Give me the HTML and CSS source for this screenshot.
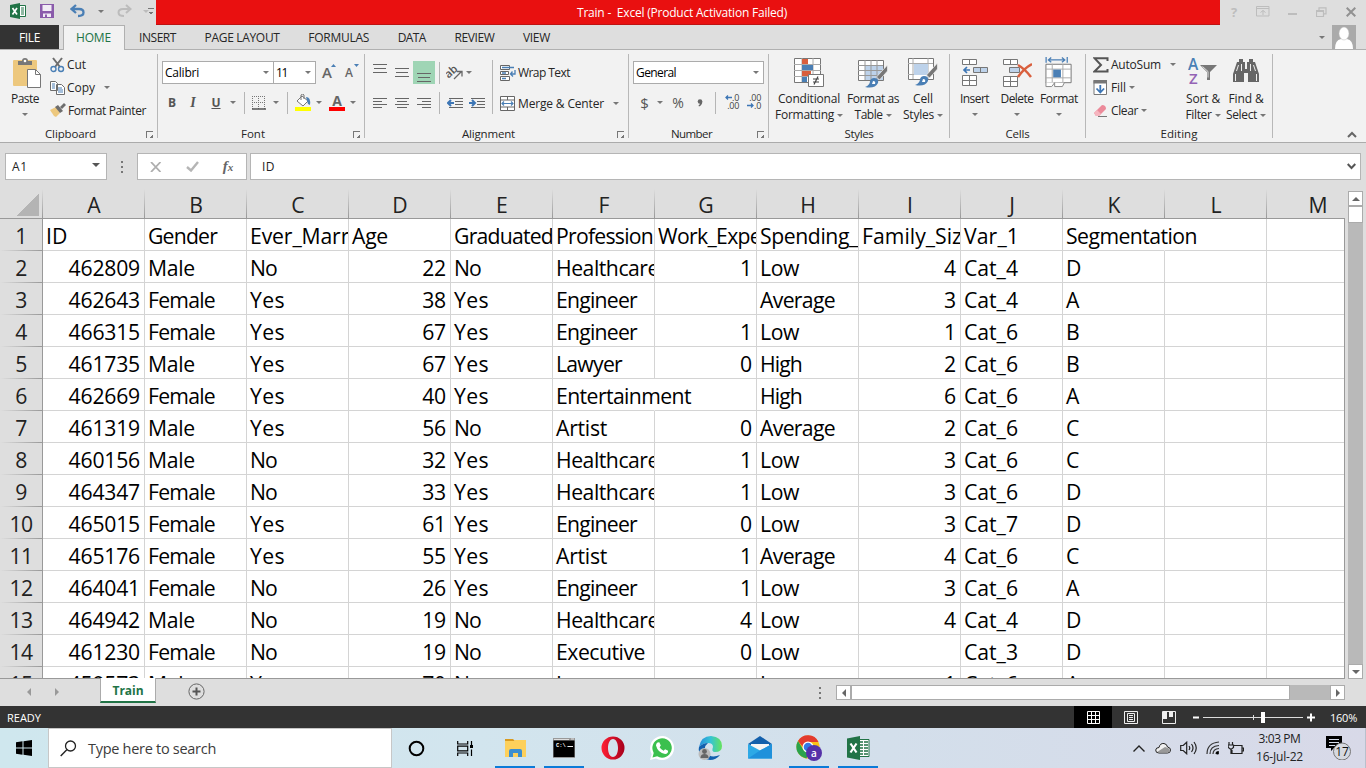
FILE: index.html
```html
<!DOCTYPE html>
<html lang="en">
<head>
<meta charset="utf-8">
<title>Train - Excel</title>
<link rel="stylesheet" href="styles.css">
</head>
<body>
<div class="app">
  <header class="titlebar">
    <div class="quick">
      <svg width="16" height="16" viewBox="0 0 16 16"><path d="M9 2.5h6.500v11H9z" fill="#fff" stroke="#217346"/><path d="M11 5h3M11 7h3M11 9h3M11 11h3" stroke="#217346"/><path d="M0 2l10-2v16L0 14z" fill="#217346"/><path d="M2.500 5l4.500 6.500M7 5l-4.500 6.500" stroke="#fff" stroke-width="1.700"/></svg>
      <svg width="14" height="14" viewBox="0 0 14 14"><path d="M0 0h14v14H0z" fill="#8a5bab"/><path d="M2.500 1h9v6h-9zM3 9.500h8V13H3z" fill="#f1ecf5"/><path d="M5 10.500h2V13H5z" fill="#8a5bab"/></svg>
      <svg width="15" height="14" viewBox="0 0 15 14"><path d="M6 1L1.500 5 6 9M2 5h7q4.500 0 4.500 3.500T8 12" fill="none" stroke="#4a7fb5" stroke-width="2.300"/></svg>
      <i class="caret"></i>
      <svg width="15" height="14" viewBox="0 0 15 14"><path d="M9 1l4.500 4L9 9M13 5H6Q1.500 5 1.500 8.500T7 12" fill="none" stroke="#bcbcbc" stroke-width="2"/></svg>
      <i class="caret pale"></i>
      <i class="more"></i>
    </div>
    <div class="alert"><span data-w="210">Train -&nbsp; Excel (Product Activation Failed)</span></div>
    <div class="winbtns">
      <b>?</b>
      <svg width="14" height="11" viewBox="0 0 14 11"><path d="M.5.500h12.500v9.500H.5zM.5 2.500h12.500M7 9V4.500M4.500 6.500L7 4.500l2.500 2" fill="none" stroke="#bdbdbd"/></svg>
      <svg width="10" height="10" viewBox="0 0 10 10"><path d="M0 7h9" stroke="#bdbdbd" stroke-width="2"/></svg>
      <svg width="11" height="10" viewBox="0 0 11 10"><path d="M.5 3.500h7v6h-7zM3 3V.800h7v6H8M.5 4.300h7" fill="none" stroke="#bdbdbd" stroke-width="1.200"/></svg>
      <svg width="10" height="10" viewBox="0 0 10 10"><path d="M.7.700l8.600 8.600M9.300.700L.7 9.300" stroke="#919191" stroke-width="2"/></svg>
    </div>
  </header>

  <nav class="tabs">
    <span class="file"><span data-w="21">FILE</span></span>
    <span class="home"><span data-w="35">HOME</span></span>
    <div class="tablist"><span data-w="37">INSERT</span><span data-w="75">PAGE LAYOUT</span><span data-w="61">FORMULAS</span><span data-w="28">DATA</span><span data-w="40">REVIEW</span><span data-w="27">VIEW</span></div>
    <i class="caret"></i>
    <svg class="avatar" width="24" height="24" viewBox="0 0 24 24"><path d="M0 0h24v24H0z" fill="#aaa"/><path d="M3 24q0-9 6-10h6q6 1 6 10z" fill="#fff"/><ellipse cx="12" cy="8.500" rx="5" ry="6.500" fill="#fff" stroke="#bbb" stroke-width=".5"/></svg>
  </nav>

  <section class="ribbon">
    <div class="group clipboard">
      <div class="body">
        <div class="paste">
          <svg width="30" height="31" viewBox="0 0 30 31"><rect x="1" y="3" width="24" height="26" rx="1" fill="#edc87e"/><path d="M6 8V4h4q0-3 3-3t3 3h4v4z" fill="#777"/><circle cx="13" cy="4" r="1.300" fill="#fff"/><path d="M15.500 12.500h8l5 5v13h-13z" fill="#fff" stroke="#777"/><path d="M23.500 12.500v5h5" fill="none" stroke="#777"/></svg>
          <span data-w="28">Paste</span><i class="caret"></i>
        </div>
        <div class="lines">
          <div><svg width="15" height="16" viewBox="0 0 15 16"><path d="M3 1l7 9M12 1L5 10" stroke="#6d6d6d" stroke-width="2"/><circle cx="3.500" cy="12" r="2.500" fill="none" stroke="#4a7fb5" stroke-width="1.400"/><circle cx="11" cy="12" r="2.500" fill="none" stroke="#4a7fb5" stroke-width="1.400"/></svg><span data-w="19">Cut</span></div>
          <div><svg width="15" height="15" viewBox="0 0 15 15"><path d="M.5 1.500h5l2 2v7h-7zM6.500 4.500h5l3 3v7h-8z" fill="#fff" stroke="#6d6d6d"/><path d="M2 4h3M2 6h3M2 8h3M8 8h4M8 10h5M8 12h5" stroke="#4a7fb5"/></svg><span data-w="28">Copy</span><i class="caret gap9"></i></div>
          <div><svg width="16" height="15" viewBox="0 0 16 15"><path d="M0 7l6-3 4 6-4 4-2-1z" fill="#edc87e"/><path d="M5 4l3-2 5 6-3 2zM10 4l4-4 2 2-4 4z" fill="#6d6d6d"/></svg><span data-w="78">Format Painter</span></div>
        </div>
      </div>
      <div class="label"><span data-w="51">Clipboard</span><i class="launch"></i></div>
    </div>

    <div class="group font">
      <div class="body col">
        <div class="r1"><div class="combo c1"><span data-w="34">Calibri</span><i class="caret"></i></div><div class="combo c2"><span data-w="11">11</span><i class="caret"></i></div>
          <div class="grow"><span>A</span><svg width="5" height="3" viewBox="0 0 5 3"><path d="M0 3l2.500-3L5 3z" fill="#4a7fb5"/></svg></div>
          <div class="grow small"><span>A</span><svg width="5" height="3" viewBox="0 0 5 3"><path d="M0 0l2.500 3L5 0z" fill="#4a7fb5"/></svg></div></div>
        <div class="r2"><b>B</b><b class="it">I</b><b class="un">U</b><i class="caret"></i><i class="sep"></i>
          <svg width="14" height="14" viewBox="0 0 14 14"><path d="M0 .5h14M0 6.500h14M.5 0v13M6.500 0v13M12.500 0v13" stroke="#777" stroke-dasharray="1 1"/><path d="M0 13h14" stroke="#555" stroke-width="1.500"/></svg>
          <i class="caret"></i><i class="sep"></i>
          <svg width="17" height="17" viewBox="0 0 17 17"><path d="M2 7l5-5 6 5-5 5z" fill="#fff" stroke="#777"/><path d="M6 6V1q2-2 3 0v4" fill="none" stroke="#777"/><path d="M11 3q5 0 4 8l-2-1z" fill="#4a7fb5"/><path d="M0 13h16v4H0z" fill="#ff0"/></svg>
          <i class="caret"></i>
          <div class="fc">A<svg width="16" height="4" viewBox="0 0 16 4"><path d="M0 0h16v4H0z" fill="#f00"/></svg></div><i class="caret"></i></div>
      </div>
      <div class="label"><span data-w="24">Font</span><i class="launch"></i></div>
    </div>

    <div class="group align">
      <div class="body">
        <div class="leftcol">
          <div class="r1">
            <svg class="up" width="14" height="9" viewBox="0 0 14 9"><path d="M0 .5h14M1 4.500h12M0 8.500h14" stroke="#666"/></svg>
            <svg width="14" height="9" viewBox="0 0 14 9"><path d="M0 .5h14M1 4.500h12M0 8.500h14" stroke="#666"/></svg>
            <div class="on"><svg width="14" height="9" viewBox="0 0 14 9"><path d="M0 .5h14M1 4.500h12M0 8.500h14" stroke="#666"/></svg></div>
            <i class="sep"></i>
            <svg width="18" height="16" viewBox="0 0 18 16"><text x="0" y="11" transform="rotate(-42 5 9)" font-size="11" fill="#555" font-family="Open Sans" font-weight="600">ab</text><path d="M8 14l7-7M11 6.500h5v5" fill="none" stroke="#666" stroke-width="1.300"/></svg>
            <i class="caret"></i></div>
          <div class="r2">
            <svg width="14" height="12" viewBox="0 0 14 12"><path d="M0 1.500h14M0 4.500h9M0 7.500h14M0 10.500h9" stroke="#666"/></svg>
            <svg width="14" height="12" viewBox="0 0 14 12"><path d="M0 1.500h14M2 4.500h10M0 7.500h14M2 10.500h10" stroke="#666"/></svg>
            <svg width="14" height="12" viewBox="0 0 14 12"><path d="M0 1.500h14M5 4.500h9M0 7.500h14M5 10.500h9" stroke="#666"/></svg>
            <i class="sep"></i>
            <svg width="16" height="12" viewBox="0 0 16 12"><path d="M2 1.500h14M8 4.500h8M8 7.500h8M2 10.500h14" stroke="#666"/><path d="M7 6H1M4 3L1 6l3 3" fill="none" stroke="#3d76b5" stroke-width="2"/></svg>
            <svg width="16" height="12" viewBox="0 0 16 12"><path d="M2 1.500h14M8 4.500h8M8 7.500h8M2 10.500h14" stroke="#666"/><path d="M0 6h6M3 3l3 3-3 3" fill="none" stroke="#3d76b5" stroke-width="2"/></svg></div>
        </div>
        <i class="sep tall"></i>
        <div class="rightcol">
          <div><svg width="16" height="16" viewBox="0 0 16 16"><path d="M.5.500h9v4h-9zM.5 6.500h8v3h-8zM.5 11.500h9v4h-9z" fill="#fff" stroke="#666"/><path d="M2 2.500h12M2 8h4M2 13.500h4M15 5v4h-4M12.500 6.500L10.500 9l2.500 2.500" fill="none" stroke="#4a7fb5" stroke-width="1.300"/></svg><span data-w="52">Wrap Text</span></div>
          <div><svg width="16" height="15" viewBox="0 0 16 15"><path d="M.5.500h14v14H.5zM.5 4h14M.5 11h14M7.500 0v4M7.500 11v4" fill="#fff" stroke="#666"/><path d="M2 7.500h11M4 5.500l-2 2 2 2M11 5.500l2 2-2 2" fill="none" stroke="#4a7fb5" stroke-width="1.200"/></svg><span data-w="86">Merge &amp; Center</span><i class="caret gap9"></i></div>
        </div>
      </div>
      <div class="label"><span data-w="53">Alignment</span><i class="launch"></i></div>
    </div>

    <div class="group number">
      <div class="body col">
        <div class="r1"><div class="combo c3"><span data-w="40">General</span><i class="caret"></i></div></div>
        <div class="r2"><span class="sym">$</span><i class="caret"></i><span class="sym pc">%</span><svg width="6" height="8" viewBox="0 0 6 8"><circle cx="3" cy="2.500" r="2.300" fill="#666"/><path d="M5.300 2.500Q5.300 6 2 7.500L1.500 6.500Q3 5.500 3 4z" fill="#666"/></svg><i class="sep"></i>
          <div class="dec"><span><svg width="7" height="5" viewBox="0 0 7 5"><path d="M7 2.500H1M3 .500l-2 2 2 2" fill="none" stroke="#3d76b5" stroke-width="1.300"/></svg>.0</span><span>.00</span></div>
          <div class="dec"><span>.00</span><span><svg width="7" height="5" viewBox="0 0 7 5"><path d="M0 2.500h6M4 .500l2 2-2 2" fill="none" stroke="#3d76b5" stroke-width="1.300"/></svg>.0</span></div></div>
      </div>
      <div class="label"><span data-w="41">Number</span><i class="launch"></i></div>
    </div>

    <div class="group styles">
      <div class="body bigs">
        <div class="big"><svg width="30" height="31" viewBox="0 0 30 31"><path d="M.5 1.500h26v24H.5z" fill="#fff" stroke="#777"/><path d="M8 1v24M19 1v24M0 7.500h27M0 13.500h27M0 19.500h27" stroke="#aaa"/><path d="M8 2h6v5H8zM8 14h9v5H8z" fill="#d95f3d"/><path d="M8 8h11v5H8zM8 20h5v5H8z" fill="#4a7fb5"/><path d="M14.500 17.500h15v12h-15z" fill="#fff" stroke="#777"/><path d="M19 22h6M19 25h6M24 19.500l-4 8" stroke="#444" stroke-width="1.200"/></svg><span data-w="62">Conditional</span><em><span data-w="59">Formatting</span><i class="caret"></i></em></div>
        <div class="big"><svg width="30" height="31" viewBox="0 0 30 31"><path d="M.5 3.500h25v20H.5z" fill="#fff" stroke="#777"/><path d="M7 8h18v15H7z" fill="#bdd2ea"/><path d="M0 8.500h25M0 13.500h25M0 18.500h25M7 3v20M13 3v20M19 3v20" stroke="#999"/><path d="M29.500 8v6l-8 9-3-3z" fill="#777" stroke="#f2f2f2" stroke-width=".7"/><path d="M16 21q5 0 4 5-3 6-13 4 5-2 5-6 1-3 4-3z" fill="#4a7fb5"/><path d="M15 24q3 0 2 3h-3z" fill="#fff"/></svg><span data-w="52">Format as</span><em><span data-w="28">Table</span><i class="caret"></i></em></div>
        <div class="big"><svg width="30" height="31" viewBox="0 0 30 31"><path d="M.5 1.500h25v21H.5z" fill="#fff" stroke="#777"/><path d="M5 1v21M20 1v21M0 6.500h25M0 17.500h25" stroke="#aaa"/><path d="M6 7h14v11H6z" fill="#bdd2ea"/><path d="M29.500 6v6l-8 9-3-3z" fill="#777" stroke="#f2f2f2" stroke-width=".7"/><path d="M16 19q5 0 4 5-3 6-13 4 5-2 5-6 1-3 4-3z" fill="#4a7fb5"/><path d="M15 22q3 0 2 3h-3z" fill="#fff"/></svg><span data-w="20">Cell</span><em><span data-w="31">Styles</span><i class="caret"></i></em></div>
      </div>
      <div class="label"><span data-w="29">Styles</span></div>
    </div>

    <div class="group cells">
      <div class="body bigs">
        <div class="big"><svg width="28" height="31" viewBox="0 0 28 31"><path d="M1.500 2.500h14v5h-14zM8.500 2.500v5M1.500 18.500h14v10h-14zM1.500 23.500h14M8.500 18.500v10" fill="#fff" stroke="#777"/><path d="M12.500 10.500h14v5h-14z" fill="#bdd2ea" stroke="#777"/><path d="M19.500 10v6" stroke="#777"/><path d="M9 13H3M6 10l-3 3 3 3" fill="none" stroke="#3d76b5" stroke-width="1.700"/></svg><span data-w="29">Insert</span><i class="caret"></i></div>
        <div class="big"><svg width="30" height="31" viewBox="0 0 30 31"><path d="M1.500 2.500h14v5h-14zM8.500 2.500v5M1.500 19.500h14v10h-14zM1.500 24.500h14M8.500 19.500v10" fill="#fff" stroke="#777"/><path d="M7.500 10.500h10v5h-10z" fill="#bdd2ea" stroke="#777"/><path d="M16 8q7 4 13 12M30 7q-8 4-14 13" fill="none" stroke="#d95f3d" stroke-width="2.500"/></svg><span data-w="33">Delete</span><i class="caret"></i></div>
        <div class="big"><svg width="28" height="32" viewBox="0 0 28 32"><path d="M.7 0v6M22.500 0v6M3 3h17M6 .5L3 3l3 2.500M17 .5L20 3l-3 2.500" fill="none" stroke="#4a7fb5" stroke-width="1.300"/><path d="M.5 7.500h26v19H.5z" fill="#fff" stroke="#777"/><path d="M7 7v19M18 7v19M0 12.500h27M0 21.500h27" stroke="#aaa"/><path d="M8 13h8v8H8z" fill="#4a7fb5"/><path d="M.5 26v4.500h6l3-4v4h8l2-4" fill="#fff" stroke="#888"/></svg><span data-w="38">Format</span><i class="caret"></i></div>
      </div>
      <div class="label"><span data-w="24">Cells</span></div>
    </div>

    <div class="group editing">
      <div class="body">
        <div class="lines">
          <div><svg width="16" height="16" viewBox="0 0 16 16"><path d="M14.500 4V1.200H1.500L8 8l-6.500 6.500h13V12" fill="none" stroke="#555" stroke-width="2"/></svg><span data-w="50">AutoSum</span><i class="caret gap9"></i></div>
          <div><svg width="16" height="15" viewBox="0 0 16 15"><path d="M1 .5h12.500v14H1z" fill="#fff" stroke="#777"/><path d="M.5 0h13.500v3.500H.5z" fill="#777"/><path d="M7.300 5v7M3.500 8.500l3.800 4 3.800-4" fill="none" stroke="#3d76b5" stroke-width="1.800"/></svg><span data-w="15">Fill</span><i class="caret gap3"></i></div>
          <div><svg width="16" height="14" viewBox="0 0 16 14"><path d="M1 9l8-8q4 0 4 4L6 12H3z" fill="#ec8a9a"/><path d="M1 9l3-3 4 4-2 2H3z" fill="#f6b5bf"/><path d="M5 12.500h9" stroke="#777"/></svg><span data-w="27">Clear</span><i class="caret gap3"></i></div>
        </div>
        <div class="big"><svg width="30" height="31" viewBox="0 0 30 31"><text x="0" y="13" font-size="15.500" font-weight="600" font-family="Open Sans" fill="#4a7fb5">A</text><text x="1" y="27" font-size="15" font-weight="600" font-family="Open Sans" fill="#9463b5">Z</text><path d="M12 8h17l-7 7v8h-3v-8z" fill="#777"/><path d="M14.500 9.500l5.500 5v6" fill="none" stroke="#ddd"/></svg><span data-w="34">Sort &amp;</span><em><span data-w="26">Filter</span><i class="caret"></i></em></div>
        <div class="big"><svg width="28" height="31" viewBox="0 0 28 31"><path d="M7 2h4v3h2v7h2V5h2V2h4v3h2l4 12v8H16v-9h-4v9H1v-8L5 5h2z" fill="#666"/><path d="M3.500 17v7M24.500 17v7M9.500 7v7M18.500 7v7M6.500 8l-2 6M21.500 8l2 6" stroke="#eee"/></svg><span data-w="35">Find &amp;</span><em><span data-w="31">Select</span><i class="caret"></i></em></div>
      </div>
      <div class="label"><span data-w="37">Editing</span></div>
    </div>
    <svg class="collapse" width="10" height="7" viewBox="0 0 10 7"><path d="M1 6l4-4 4 4" fill="none" stroke="#666" stroke-width="2"/></svg>
  </section>

  <section class="formula">
    <div class="namebox"><span data-w="16">A1</span><i class="caret dark"></i></div>
    <div class="dots"><i></i><i></i><i></i></div>
    <div class="fbtns">
      <svg width="12" height="10" viewBox="0 0 12 10"><path d="M1 0l9.500 10M10.500 0L1 10" stroke="#aeaeae" stroke-width="1.800"/></svg>
      <svg width="13" height="11" viewBox="0 0 13 11"><path d="M1 6l4 3.500L12 1" fill="none" stroke="#b5b5b5" stroke-width="2.400"/></svg>
      <span class="fx">f<small>x</small></span>
    </div>
    <div class="finput"><span data-w="13">ID</span><svg width="9" height="7" viewBox="0 0 9 7"><path d="M.7 1l3.800 4L8.300 1" fill="none" stroke="#555" stroke-width="2"/></svg></div>
  </section>

  <section class="workspace">
    <div class="sheet">
      <div class="colheads" id="colheads"></div>
      <div class="rows" id="rows"></div>
    </div>
    <div class="vscroll"><div class="sbtn"><i class="tri up"></i></div><div class="vthumb"></div><div class="vtrack"></div><div class="sbtn"><i class="tri down"></i></div></div>
  </section>

  <section class="sheetbar">
    <i class="tri left pale"></i><i class="tri right pale"></i>
    <div class="sheettab"><span data-w="31">Train</span></div>
    <svg class="add" width="17" height="17" viewBox="0 0 17 17"><circle cx="8.500" cy="8.500" r="7.600" fill="none" stroke="#666"/><path d="M4.500 8.500h8M8.500 4.500v8" stroke="#555" stroke-width="2"/></svg>
    <div class="dots"><i></i><i></i><i></i></div>
    <div class="hscroll"><div class="sbtn"><i class="tri left"></i></div><div class="hthumb"></div><div class="htrack"></div><div class="sbtn"><i class="tri right"></i></div></div>
  </section>

  <section class="status">
    <div class="ready"><span data-w="34">READY</span></div>
    <div class="view on"><svg width="13" height="13" viewBox="0 0 13 13"><path d="M.5.500h12v12H.5zM.5 4.500h12M.5 8.500h12M4.500 0v12M8.500 0v12" fill="none" stroke="#fff"/></svg></div>
    <div class="view"><svg width="14" height="13" viewBox="0 0 14 13"><path d="M.5.500h13v12H.5zM3.500 2.500h7v8h-7zM5 4.500h4M5 6.500h4M5 8.500h4" fill="none" stroke="#eee"/></svg></div>
    <div class="view"><svg width="14" height="13" viewBox="0 0 14 13"><path d="M.5.500h13v12H.5z" fill="none" stroke="#eee"/><path d="M1 0h4v8H1zM7 0h4v6H7z" fill="#eee"/></svg></div>
    <svg class="zoombar" width="126" height="13" viewBox="0 0 126 13"><path d="M1 6.500h6M115 6.500h8M119 2.500v8" stroke="#fff" stroke-width="2"/><path d="M11 6.500h100" stroke="#ddd" /><path d="M61.500 4v5" stroke="#ddd"/><path d="M69 1h4v11h-4z" fill="#fff"/></svg>
    <span class="pct" data-w="27">160%</span>
  </section>

  <footer class="taskbar">
    <div class="start"><svg width="16" height="16" viewBox="0 0 16 16"><path d="M0 2.200l6.500-.9v6.200H0zM7.500 1.200L16 0v7.500H7.500zM0 8.500h6.500v6.200L0 13.800zM7.500 8.500H16V16l-8.500-1.200z"/></svg></div>
    <div class="search"><svg width="17" height="17" viewBox="0 0 17 17"><circle cx="10.500" cy="6" r="5" fill="none" stroke="#222" stroke-width="1.300"/><path d="M6.800 9.700L.7 16" stroke="#222" stroke-width="1.400"/></svg><span data-w="128">Type here to search</span></div>
    <div class="task"><svg width="17" height="17" viewBox="0 0 17 17"><circle cx="8.500" cy="8.500" r="6.800" fill="none" stroke="#000" stroke-width="2"/></svg></div>
    <div class="task"><svg width="17" height="17" viewBox="0 0 17 17"><path d="M.7 1v3h10V1M.7 16v-3h10v3M.7 6.200h10v4.600H.7zM14.500 1v4M14.500 9.500V16" fill="none" stroke="#000" stroke-width="1.200"/><path d="M13 5h3v3h-3z"/></svg></div>
    <div class="task run"><svg width="24" height="24" viewBox="0 0 24 24"><path d="M2 3h8l2 2H2z" fill="#d99a1f"/><path d="M2 5h9l1-1h11v17H2z" fill="#fdd05b"/><path d="M6 21v-6q0-2 2-2h9q2 0 2 2v6h-4v-4h-5v4z" fill="#3b8ed0"/></svg></div>
    <div class="task run"><svg width="24" height="24" viewBox="0 0 24 24"><path d="M1 2h22v20H1z" fill="#999"/><path d="M1.500 4.500h21V21h-21z" fill="#000"/><path d="M2 3.500h15M19 3h3" stroke="#ddd"/><text x="4" y="11" font-size="5.500" font-weight="700" font-family="Liberation Mono" fill="#fff">C:\.</text><path d="M16 10.500h5" stroke="#eee"/></svg></div>
    <div class="task"><svg width="24" height="24" viewBox="0 0 24 24"><defs><linearGradient id="op"><stop offset="0" stop-color="#ff2034"/><stop offset="1" stop-color="#a7001b"/></linearGradient></defs><path d="M12 .5a11.500 11.500 0 100 23 11.500 11.500 0 000-23zm0 2.500c3 0 5 4 5 9s-2 9-5 9-5-4-5-9 2-9 5-9z" fill="url(#op)" fill-rule="evenodd"/></svg></div>
    <div class="task"><svg width="24" height="24" viewBox="0 0 24 24"><path d="M0 24l1.700-6A12 12 0 1112 24q-3 0-6-1.500z" fill="#fff"/><path d="M2.500 21.500l1.200-4.600A9.700 9.700 0 1112 21.700q-2.700 0-4.800-1.400z" fill="#3bc04e"/><path d="M7.500 6.500l1.800-.3 1.500 3.300-1.200 1.700q1.500 2.500 4 3.600l1.500-1.600 3 1.500q.2 3-3 3.300Q8 17 6 9.500q0-2 1.500-3z" fill="#fff"/></svg></div>
    <div class="task"><svg width="25" height="24" viewBox="0 0 25 24"><defs><linearGradient id="ed"><stop offset="0" stop-color="#258bdc"/><stop offset=".5" stop-color="#35c3d5"/><stop offset="1" stop-color="#65e35b"/></linearGradient></defs><path d="M1 11Q3 0 13 0q11 1 11 10 0 6-7 6-4 0-2-5 0-4-5-4-5 0-9 4z" fill="url(#ed)"/><path d="M1 11q4-4 9-4-5 4-2 9 4 7 14 3-4 5-10 5Q-1 22 1 11z" fill="#1260ae"/><circle cx="6.500" cy="18" r="6" fill="#bbb"/><circle cx="6.500" cy="15.500" r="2.400" fill="#666"/><path d="M2.500 22q0-4 4-4t4 4z" fill="#666"/></svg></div>
    <div class="task"><svg width="24" height="24" viewBox="0 0 24 24"><path d="M0 8l12-8 12 8-12 6z" fill="#1360ac"/><path d="M3 8h18v8H3z" fill="#f5f5f5"/><path d="M0 8l12 6.500L24 8v14.500H0z" fill="#2da9e6"/><path d="M0 22.500l12-8L24 8v14.500z" fill="#1f91db"/></svg></div>
    <div class="task run"><svg width="26" height="26" viewBox="0 0 26 26"><circle cx="12" cy="12" r="11.500" fill="#fbc116"/><path d="M2 6a11.500 11.500 0 0120.500 1H12L7 12z" fill="#e33b2e"/><path d="M2 6l5.500 9 5 3-2 5.400A11.500 11.500 0 012 6z" fill="#2ba24c"/><circle cx="12" cy="12" r="5.500" fill="#fff"/><circle cx="12" cy="12" r="4.300" fill="#3478e6"/><circle cx="18" cy="18" r="8" fill="#5531a8"/><text x="18" y="21.500" font-size="10" text-anchor="middle" font-family="Open Sans" fill="#fff" font-weight="600">a</text></svg></div>
    <div class="task run"><svg width="24" height="24" viewBox="0 0 24 24"><path d="M13 3.500h10v17H13z" fill="#fff" stroke="#217346"/><path d="M14 6h3M18 6h4M14 9h3M18 9h4M14 12h3M18 12h4M14 15h3M18 15h4M14 18h3M18 18h4" stroke="#217346" stroke-width="1.500"/><path d="M1 2.500L14 0v24L1 21.500z" fill="#217346"/><path d="M4.500 7.500l6 9M10.500 7.500l-6 9" stroke="#fff" stroke-width="2.200"/></svg></div>
    <div class="tray">
      <svg width="12" height="7" viewBox="0 0 12 7"><path d="M.5 6.500L6 1l5.500 5.500" fill="none" stroke="#222" stroke-width="1.400"/></svg>
      <svg width="16" height="12" viewBox="0 0 16 12"><path d="M4 11Q.5 11 .7 8 1 5.500 4 5.500 5 1 9 1.500q3 .500 3.500 3.500 3 .500 3 3 0 3-3 3z" fill="#f0f0f0" stroke="#222"/><path d="M2 10l8-5q5 1 5 4-1 1.500-3 1.500H4z" fill="#999"/></svg>
      <svg width="17" height="14" viewBox="0 0 17 14"><path d="M.7 4.500h2.500l3.500-3.300v11.600L3.200 9.500H.7zM9 5q1.500 2 0 4M11.500 3q3 4 0 8M14 1q4.500 6 0 12" fill="none" stroke="#222" stroke-width="1.200"/></svg>
      <svg width="14" height="14" viewBox="0 0 14 14"><path d="M1 13Q1 2 13 1M4 13q0-8 9-8.500M7 13q0-5 6-5.500M10 13q0-2.500 3-2.500" fill="none" stroke="#333" stroke-width="1.200"/><circle cx="11.500" cy="12" r="1.500"/></svg>
      <svg width="16" height="13" viewBox="0 0 16 13"><path d="M5.500 3.500H14v8H4V8M14 6h1.500v3H14M1 0v3M4.500 0v3M0 3h5.500v2.500L3 7.500.3 5.500zM3 7v5" fill="none" stroke="#222" stroke-width="1.200"/></svg>
      <div class="clock"><span data-w="42">3:03 PM</span><span data-w="47">16-Jul-22</span></div>
      <div class="notif"><svg width="26" height="26" viewBox="0 0 26 26"><path d="M0 2h16v12H8l-3 3v-3H0z"/><path d="M3 5.500h10M3 8.500h10M3 11.500h6" stroke="#d6dcea"/><circle cx="16" cy="17.500" r="8.500" fill="#d6d9e0" stroke="#777"/><text x="16" y="22" text-anchor="middle" font-family="Open Sans" font-size="12" fill="#111">17</text></svg></div>
      <i class="edge"></i>
    </div>
  </footer>
</div>
<script src="app.js"></script>
</body>
</html>
```
FILE: styles.css
```css
*{box-sizing:border-box}
body{margin:0;width:1366px;height:768px;overflow:hidden;font-family:"Open Sans","Noto Sans",sans-serif;font-size:12px;color:#262626;background:#dedede}
.app{display:flex;flex-direction:column;height:768px}
svg{display:block;flex:none}
span{white-space:nowrap}
.caret{flex:none;width:0;height:0;border:3px solid transparent;border-top-color:#777;border-bottom:0}
.caret.pale{border-top-color:#bcbcbc}
.caret.dark{border-width:4px 4px 0;border-top-color:#555}
.gap9{margin-left:7px}
.gap3{margin-left:1px}
.sep{width:1px;height:22px;background:#b5b5b5}

.titlebar{display:flex;height:25px}
.quick{display:grid;width:156px;flex:none;grid-template-columns:36px 22px 38px 10px 36px 8px 5px;align-content:center;align-items:center;height:22px;justify-items:center}
.more{width:6px;height:6px;border-top:1px solid #777;margin-left:-4px;background:linear-gradient(#777,#777) 1px 3px/4px 1px no-repeat,linear-gradient(#777,#777) 2px 4px/2px 1px no-repeat}
.alert{width:1064px;padding-right:12px;background:#e91010;border-bottom:1px solid #be1212;color:#fff;text-align:center;line-height:26px}
.winbtns{display:grid;grid-template-columns:28px 30px 29px 29px 30px;height:23px;align-items:center;justify-items:center;color:#bdbdbd}
.winbtns b{font-size:13px}
.tabs{display:flex;height:25px;border-bottom:1px solid #b0b0b0;line-height:26px}
.file{width:59px;background:#333;color:#fff;text-align:center}
.home{width:62px;margin-left:4px;height:25px;background:#f2f2f2;border:1px solid #b0b0b0;border-bottom:0;color:#217346;text-align:center;line-height:24px;padding-right:1px}
.tablist{display:flex;gap:28.600px;margin-left:14px;width:1180px}
.tabs>.caret{margin-top:11px;margin-right:7px}

.ribbon{display:flex;height:93px;padding-top:4px;background:#f2f2f2;border-bottom:1px solid #ababab}
.group{display:flex;flex-direction:column;height:84px;border-right:1px solid #b8b8b8;flex:none}
.body{display:flex;height:70px;flex:none}
.body.col{display:block;padding-left:4px}
.label{position:relative;height:14px;line-height:20px;text-align:center;font-size:11.500px}
.launch{position:absolute;right:4px;top:7px;width:7px;height:7px;border-left:1px solid #777;border-top:1px solid #777;background:linear-gradient(135deg,transparent 45%,#777 45%) 2px 2px/5px 5px no-repeat}
.clipboard{width:158px}.clipboard .label{padding-right:16px}
.paste{width:50px;display:flex;flex-direction:column;align-items:center;padding-top:3px}
.paste svg{margin-left:4px}
.paste span{line-height:20px;margin-top:1px}
.paste .caret{margin-top:4px}
.lines{margin-top:-1px}
.lines>div{height:23px;display:flex;align-items:center;gap:2px}
.font{width:207px}.font .label{padding-right:16px}
.r1{height:37px;display:flex;align-items:center}
.r2{height:25px;display:grid;align-items:center;justify-items:center}
.combo{height:23px;border:1px solid #ababab;background:#fff;display:flex;align-items:center;justify-content:space-between;padding:0 4px 0 2px;color:#000}
.c1{width:112px}.c2{width:43px;margin-left:-1px}.c3{width:131px}
.grow{display:flex;width:12px;margin-left:6px;font-size:15px;font-weight:600;color:#666;line-height:19px}
.grow span{width:10px}
.grow svg{margin:1px -3px 0 -1px}
.grow.small{font-size:12px;margin-left:11px;line-height:20px}
.font .r2{grid-template-columns:20px 22px 24px 10px 12px 18px 16px 6px 26px 6px 30px 2px;color:#555;margin-top:-1px}
.it{font-family:"Liberation Serif",serif;font-style:italic;font-size:14px}
.un{text-decoration:underline}
.fc{font-weight:700;font-size:14px;line-height:13px;display:flex;flex-direction:column;align-items:center;color:#666}
.align{width:264px}.align .label{padding-right:16px}
.leftcol{width:119px;margin-left:4px}
.leftcol .r1{display:grid;grid-template-columns:22px 22px 22px 8px 24px 4px;justify-items:center}
.leftcol .r2{grid-template-columns:22px 22px 22px 8px 24px 20px;margin-top:-1px}
.leftcol .up{margin-top:-8px}
.on{background:#9fd5b5}
.leftcol .on{width:22px;height:23px;padding:12px 4px 0}
.sep.tall{height:54px;margin:6px 7px 0 4px}
.rightcol>div{height:31px;display:flex;align-items:center;gap:2px}
.rightcol{padding-top:3px}
.number{width:140px}.number .label{padding-right:14px}
.number .r2{grid-template-columns:23px 8px 28px 16px 14px 18px 26px;margin-top:-1px}
.sym{font-size:15px;color:#555}
.pc{font-size:14px}
.dec{display:flex;flex-direction:column;align-items:flex-end;font-size:9px;line-height:8px;color:#444;width:16px;padding-bottom:2px;letter-spacing:-.3px}
.dec span{display:flex;align-items:center}
.styles{width:181px}.cells{width:136px}.editing{width:187px}
.bigs{display:grid}
.styles .bigs{grid-template-columns:80px 48px 52px}
.cells .bigs{grid-template-columns:49px 36px 48px}
.big{display:flex;flex-direction:column;align-items:center;padding-top:3px;min-width:0}
.big>span{line-height:16px;margin-top:3px;height:16px;margin-bottom:1px}
.big svg{height:31px}
.big em{display:flex;align-items:center;font-style:normal;gap:3px;line-height:14px}
.big>.caret{margin-top:5px}
.editing .lines{width:96px;padding-left:7px}
.editing .big{width:42px}
.editing .big+.big{width:44px}
.collapse{margin:77px 0 0 74px}

.formula{display:flex;height:46px;padding:10px 5px 9px;font-size:12px;color:#222}
.formula>div{height:27px}
.namebox{width:102px;background:#fff;border:1px solid #b5b5b5;display:flex;align-items:center;justify-content:space-between;padding:0 6px}
.namebox .dark{margin-top:-3px}
.dots{display:flex;flex-direction:column;justify-content:center;gap:3px;align-items:center;width:30px}
.dots i{width:2px;height:2px;background:#777}
.fbtns{width:110px;background:#fff;border:1px solid #b5b5b5;display:grid;grid-template-columns:36px 36px 36px;justify-items:center;align-items:center}
.fx{font:italic 700 15px "Liberation Serif",serif;color:#666}.fx small{font-size:11px}
.finput{width:1111px;margin-left:3px;background:#fff;border:1px solid #b5b5b5;display:flex;align-items:center;justify-content:space-between;padding:0 4px 0 11px}

.workspace{display:flex;height:490px}
.sheet{width:1345px;height:490px;overflow:hidden;border-bottom:1px solid #999;font-size:21.200px;color:#000;font-stretch:88%}
.colheads{display:flex;height:30px;border-bottom:1px solid #999}
.colheads>div{width:102px;flex:none;text-align:center;line-height:32px;color:#222;background:linear-gradient(#dedede,#999) right/1px 100% no-repeat}
.colheads>.corner{width:43px;background:linear-gradient(#dedede,#999) right/1px 100% no-repeat,linear-gradient(135deg,transparent 50%,#b4b4b4 50%) 17px 5px/22px 22px no-repeat}
.rows{background:#fff;border-right:1px solid #999;height:459px;overflow:hidden}
.row{display:flex;height:32px}
.rowhead{width:43px;flex:none;background:linear-gradient(90deg,#dedede,#999) bottom/100% 1px no-repeat #dedede;border-right:1px solid #999;text-align:center;line-height:33px;color:#222}
.cell{width:102px;flex:none;border-right:1px solid #d4d4d4;border-bottom:1px solid #d4d4d4;line-height:33px;padding:0 3px;overflow:hidden;white-space:nowrap}
.cell.num{text-align:right;padding-right:4px}
.cell.spill{overflow:visible;border-right-color:transparent}
.vscroll{width:15px;margin-left:3px;padding-top:2px;display:flex;flex-direction:column}
.sbtn{width:15px;height:15px;background:#fff;border:1px solid #ababab;display:flex;align-items:center;justify-content:center;flex:none}
.vthumb{height:17px;background:#fff;border:1px solid #ababab}
.vtrack{flex:1;background:#b9b9b9}
.tri{width:0;height:0;border:4px solid transparent;flex:none}
.tri.up{border-bottom-color:#666;border-top:0}.tri.down{border-top-color:#666;border-bottom:0}
.tri.left{border-right-color:#666;border-left:0}.tri.right{border-left-color:#666;border-right:0}

.sheetbar{display:flex;height:27px;align-items:flex-start}
.sheetbar>.tri{margin-top:9px}
.tri.pale.left{margin-left:27px;border-right-color:#999}.tri.pale.right{margin-left:24px;border-left-color:#999}
.sheettab{width:56px;height:25px;margin-left:41px;margin-top:-1px;background:#fff;border:1px solid #ababab;border-top:0;border-bottom:2px solid #217346;color:#217346;font-weight:700;text-align:center;line-height:26px}
.add{margin:4px 0 0 32px}
.sheetbar .dots{margin-left:600px;height:27px}
.hscroll{display:flex;margin:6px 0 0 1px;width:509px}
.hthumb{width:439px;background:#fff;border:1px solid #ababab}
.htrack{flex:1;background:#b9b9b9}

.status{display:flex;align-items:center;height:22px;background:#333;color:#fff;font-size:11px}
.ready{padding-left:7px;width:1074px;flex:none}
.view{width:38px;height:22px;display:flex;align-items:center;justify-content:center;flex:none}
.view.on{background:#000}
.zoombar{margin-left:4px}
.pct{margin-left:12px}

.taskbar{display:flex;height:40px;background:linear-gradient(90deg,#cfe7ee,#d2e5ee 35%,#d3dfeb 65%,#d8d9e8)}
.start{width:48px;padding:12px 16px;flex:none}
.search{width:344px;flex:none;background:#fff;border:1px solid #c7c7c7;display:flex;align-items:center;gap:11px;padding-left:11px;font-size:14.500px;color:#3c3c3c}
.task{width:49px;flex:none;display:flex;align-items:center;justify-content:center}
.task.run{background:linear-gradient(#0b7bd8,#0b7bd8) center bottom/40px 2px no-repeat}
.tray{width:239px;margin-left:245px;flex:none;display:grid;grid-template-columns:24px 24px 26px 24px 22px 65px 53px 1px;align-items:center;justify-items:center}
.clock{display:flex;flex-direction:column;align-items:center;line-height:18px;color:#222;font-size:12px}
.notif{margin-top:-2px}
.edge{width:1px;height:40px;background:#b9c0cc}
```
FILE: app.js
```js
const WIDTHS = {
  Male: 47, Female: 67, No: 27, Yes: 35, Gender: 69, Ever_Married: 129, Age: 36, Graduated: 99,
  Profession: 97, Work_Experience: 160, Spending_Score: 151, Family_Size: 112, Var_1: 55,
  Segmentation: 131, Healthcare: 103, Engineer: 81, Lawyer: 66, Entertainment: 135, Artist: 51,
  Executive: 89, Low: 39, Average: 75, High: 42, Cat_4: 54, Cat_6: 54, Cat_7: 54, Cat_3: 54
};
const DATA = [
  'ID|Gender|Ever_Married|Age|Graduated|Profession|Work_Experience|Spending_Score|Family_Size|Var_1|Segmentation',
  '462809|Male|No|22|No|Healthcare|1|Low|4|Cat_4|D',
  '462643|Female|Yes|38|Yes|Engineer||Average|3|Cat_4|A',
  '466315|Female|Yes|67|Yes|Engineer|1|Low|1|Cat_6|B',
  '461735|Male|Yes|67|Yes|Lawyer|0|High|2|Cat_6|B',
  '462669|Female|Yes|40|Yes|Entertainment||High|6|Cat_6|A',
  '461319|Male|Yes|56|No|Artist|0|Average|2|Cat_6|C',
  '460156|Male|No|32|Yes|Healthcare|1|Low|3|Cat_6|C',
  '464347|Female|No|33|Yes|Healthcare|1|Low|3|Cat_6|D',
  '465015|Female|Yes|61|Yes|Engineer|0|Low|3|Cat_7|D',
  '465176|Female|Yes|55|Yes|Artist|1|Average|4|Cat_6|C',
  '464041|Female|No|26|Yes|Engineer|1|Low|3|Cat_6|A',
  '464942|Male|No|19|No|Healthcare|4|Low|4|Cat_4|D',
  '461230|Female|No|19|No|Executive|0|Low||Cat_3|D',
  '459573|Male|Yes|70|No|Lawyer||Low|1|Cat_6|A'
];
const heads = document.getElementById('colheads');
heads.innerHTML = '<div class="corner"></div>' + [...'ABCDEFGHIJKLM'].map(c => `<div>${c}</div>`).join('');
document.getElementById('rows').innerHTML = DATA.map((line, r) => {
  const values = line.split('|');
  while (values.length < 13) values.push('');
  const cells = values.map(v => {
    const num = /^\d+$/.test(v);
    const spill = v === 'Entertainment' || v === 'Segmentation';
    const w = num ? v.length * 11.9 : WIDTHS[v];
    return `<div class="cell${num ? ' num' : ''}${spill ? ' spill' : ''}"><span${w ? ` data-w="${w}"` : ''}>${v}</span></div>`;
  }).join('');
  return `<div class="row"><div class="rowhead"><span data-w="${String(r + 1).length * 11.5}">${r + 1}</span></div>${cells}</div>`;
}).join('');

// Track each label to its nominal width.
function fit() {
  document.querySelectorAll('[data-w]').forEach(el => {
    const range = document.createRange();
    range.selectNodeContents(el);
    el.style.letterSpacing = '0';
    const natural = range.getBoundingClientRect().width;
    el.style.letterSpacing = (el.dataset.w - natural) / el.textContent.length + 'px';
  });
}
fit();
```
